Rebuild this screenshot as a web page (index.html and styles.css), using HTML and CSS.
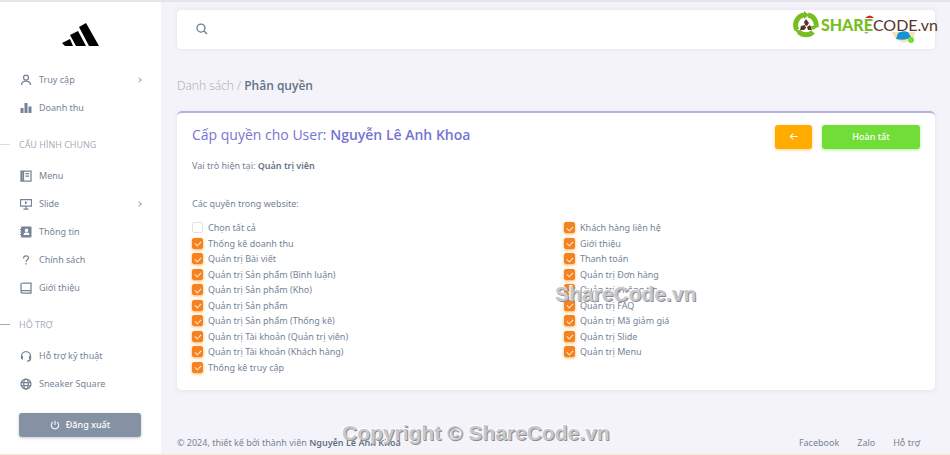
FILE: index.html
```html
<!DOCTYPE html>
<html lang="vi">
<head>
<meta charset="UTF-8">
<meta name="viewport" content="width=device-width, initial-scale=1.0">
<title>Phân quyền</title>
<link rel="stylesheet" href="styles.css">
</head>
<body>

<div class="layout">
    <aside class="sidebar">
        <a class="brand" href="#" aria-label="Trang chủ">
            <svg width="38" height="24" viewBox="0 0 38 24"><path d="M0 20l8-4 3 7H3zM8 12l8-4 8 15H14zM17 4l7-4 13 23H27z"/></svg>
        </a>
        <nav>
            <a class="item" href="#"><svg class="ico" viewBox="0 0 24 24"><circle cx="12" cy="7" r="5"/><path d="M3 22c0-5 3-8 9-8s9 3 9 8"/></svg>Truy cập<span class="arrow"></span></a>
            <a class="item" href="#"><svg class="ico solid" viewBox="0 0 24 24"><path d="M1 12h6v10H1zM9 2h6v20H9zM17 9h6v13h-6z"/></svg>Doanh thu</a>
            <h6>CẤU HÌNH CHUNG</h6>
            <a class="item" href="#"><svg class="ico" viewBox="0 0 24 24"><path d="M2 2h20v20H2zM7 2v20M11 7h7M11 12h7M4 2v20"/></svg>Menu</a>
            <a class="item" href="#"><svg class="ico" viewBox="0 0 24 24"><path d="M1 3h22v13H1zM12 16v6M7 22h10"/><path class="fill" d="M10 6l5 3.500-5 3.500z"/></svg>Slide<span class="arrow"></span></a>
            <a class="item" href="#"><svg class="ico solid" viewBox="0 0 24 24"><path fill-rule="evenodd" d="M4 1h17q2 0 2 2v18q0 2-2 2H4q-2 0-2-2v-3H0v-2h2v-3H0v-2h2V8H0V6h2V3q0-2 2-2zM13 5a3.500 3.500 0 1 0 .1 0zM7 18h12c0-4-3-5-6-5s-6 1-6 5z"/></svg>Thông tin</a>
            <a class="item" href="#"><svg class="ico" viewBox="0 0 24 24"><path d="M7 9c0-7 10-7 10-1 0 4-5 3-5 8M12 18v3"/></svg>Chính sách</a>
            <a class="item" href="#"><svg class="ico" viewBox="0 0 24 24"><path d="M5 2h17v20H5c-4 0-4-5 0-5h17M2 19V4l2-2"/></svg>Giới thiệu</a>
            <h6 class="dark">HỖ TRỢ</h6>
            <a class="item" href="#"><svg class="ico" viewBox="0 0 24 24"><path d="M3 15v-3a9 9 0 0 1 18 0v6q0 4-7 4"/><path class="fill" d="M2 12h4v7H4l-2-2zM18 12h4v5l-2 2h-2z"/></svg>Hỗ trợ kỹ thuật</a>
            <a class="item" href="#"><svg class="ico" viewBox="0 0 24 24"><circle cx="12" cy="12" r="10"/><ellipse cx="12" cy="12" rx="4.500" ry="10"/><path d="M2 9h20M2 15h20"/></svg>Sneaker Square</a>
        </nav>
        <button class="btn logout" type="button"><svg class="ico" viewBox="0 0 24 24"><path d="M12 2v10M7 5a9 9 0 1 0 10 0"/></svg>Đăng xuất</button>
    </aside>

    <main>
        <header class="topbar">
            <button class="search" type="button" aria-label="Tìm kiếm"><svg class="ico" viewBox="0 0 24 24"><circle cx="10" cy="10" r="8"/><path d="M16 16l6 6"/></svg></button>
            <!-- avatar, nằm dưới logo ShareCode -->
            <svg class="avatar" width="24" height="16" viewBox="0 0 24 16"><path fill="#f5e3b5" d="M0 4h23q0 8-11 11Q2 12 0 4z"/><path fill="#1593d2" d="M4 11l2-6q5-3 10-1l3 5q-5 4-15 2z"/><circle cx="19" cy="12" r="3" fill="#71dd37"/></svg>
            <svg class="bell" width="10" height="20" viewBox="0 0 10 20"><path fill="#e0242b" d="M1 3q5-5 9 0z"/><path fill="#a1acb8" d="M0 17h5l-3 2z"/></svg>
            <a class="sharecode" href="#">
                <svg width="26" height="28" viewBox="0 0 26 28">
                    <g fill="none" stroke="#78be20" stroke-width="5"><path d="M4 19A10 10 0 0 1 12 4"/><path d="M15 4a10 10 0 0 1 8 12"/><path d="M20 21A10 10 0 0 1 6 21"/></g>
                    <path fill="#78be20" d="M11 0l5 4-5 4zM26 15l-6 4-3-4zM2 19l6 0-2 5z"/>
                    <path fill="#5b3427" d="M13 8l3 4-2 3-2-1-1-3zM7 19l1-4 4-1 1 3-2 2zM19 19h-4l-1-3 3-2z"/>
                </svg>
                <span class="sc-name"><b>SHARE</b>CODE.vn</span>
            </a>
        </header>

        <h4 class="crumb"><span>Danh sách /</span> Phân quyền</h4>

        <form class="card">
            <div class="card-head">
                <h5>Cấp quyền cho User: <b>Nguyễn Lê Anh Khoa</b></h5>
                <div class="actions">
                    <button class="btn back" type="button" aria-label="Quay lại"><svg class="ico" viewBox="0 0 24 24"><path d="M21 11H4M10 4l-7 7 7 7"/></svg></button>
                    <button class="btn done" type="submit">Hoàn tất</button>
                </div>
            </div>
            <p class="role">Vai trò hiện tại: <b>Quản trị viên</b></p>
            <p class="note">Các quyền trong website:</p>
            <div class="perms">
                <label><input type="checkbox">Chọn tất cả</label>
                <label><input type="checkbox" checked>Thống kê doanh thu</label>
                <label><input type="checkbox" checked>Quản trị Bài viết</label>
                <label><input type="checkbox" checked>Quản trị Sản phẩm (Bình luận)</label>
                <label><input type="checkbox" checked>Quản trị Sản phẩm (Kho)</label>
                <label><input type="checkbox" checked>Quản trị Sản phẩm</label>
                <label><input type="checkbox" checked>Quản trị Sản phẩm (Thống kê)</label>
                <label><input type="checkbox" checked>Quản trị Tài khoản (Quản trị viên)</label>
                <label><input type="checkbox" checked>Quản trị Tài khoản (Khách hàng)</label>
                <label><input type="checkbox" checked>Thống kê truy cập</label>
                <label><input type="checkbox" checked>Khách hàng liên hệ</label>
                <label><input type="checkbox" checked>Giới thiệu</label>
                <label><input type="checkbox" checked>Thanh toán</label>
                <label><input type="checkbox" checked>Quản trị Đơn hàng</label>
                <label><input type="checkbox" checked>Quản trị Thông tin</label>
                <label><input type="checkbox" checked>Quản trị FAQ</label>
                <label><input type="checkbox" checked>Quản trị Mã giảm giá</label>
                <label><input type="checkbox" checked>Quản trị Slide</label>
                <label><input type="checkbox" checked>Quản trị Menu</label>
            </div>
        </form>

        <footer>
            <div>© 2024, thiết kế bởi thành viên <b>Nguyễn Lê Anh Khoa</b></div>
            <div class="links"><a href="#">Facebook</a><a href="#">Zalo</a><a href="#">Hỗ trợ</a></div>
        </footer>
    </main>
</div>

<div class="mark mark-center">ShareCode.vn</div>
<div class="mark mark-bottom">Copyright © ShareCode.vn</div>

</body>
</html>
```
FILE: styles.css
```css
* {
    box-sizing: border-box;
}
body {
    margin: 0;
    font-family: "Noto Sans", "Open Sans", sans-serif;
    font-size: 9px;
    line-height: 16px;
    color: #748496;
    background: #f4f3f9;
    border-top: 2px solid #e4e4ea;
    position: relative;
}
a {
    color: inherit;
    text-decoration: none;
}
b {
    font-weight: 600;
    color: #627386;
}
p, h4, h5, h6 {
    margin: 0;
}
h4, h5, h6 {
    font-family: "Open Sans", sans-serif;
}
.layout {
    display: flex;
    min-height: calc(100vh - 2px);
    border-bottom: 1px solid #f2e9dc;
}
.ico {
    width: 12px;
    height: 12px;
    fill: none;
    stroke: currentColor;
    stroke-width: 2.5;
    flex: none;
}
.ico.solid, .ico .fill {
    fill: currentColor;
    stroke: none;
}

/* thanh bên */
.sidebar {
    width: 161px;
    flex: none;
    background: #fff;
}
.brand {
    display: block;
    height: 64px;
    padding: 21px 0 0 62px;
}
.brand svg {
    display: block;
}
.item {
    display: flex;
    align-items: center;
    height: 28px;
    padding: 0 19px 0 20px;
    gap: 7px;
}
.arrow {
    width: 4px;
    height: 4px;
    margin-left: auto;
    margin-right: 1px;
    border: solid #a0aab5;
    border-width: 1px 1px 0 0;
    transform: rotate(45deg);
}
.sidebar h6 {
    display: flex;
    align-items: center;
    gap: 9px;
    height: 40px;
    padding-top: 5px;
    font-size: 9px;
    font-weight: 400;
    color: #a1acb8;
}
.sidebar h6::before {
    content: "";
    width: 10px;
    height: 1px;
    background: #d9dee3;
}
.sidebar h6.dark::before {
    background: #a1acb8;
}
.btn {
    display: flex;
    align-items: center;
    justify-content: center;
    height: 24px;
    border: 0;
    border-radius: 3px;
    padding: 0;
    font: 500 9px/16px "Noto Sans", "Open Sans", sans-serif;
    color: #fff;
}
.btn .ico {
    width: 10px;
    height: 10px;
}
.logout {
    gap: 6px;
    width: 122px;
    margin: 15px 0 0 19px;
    background: #8592a3;
    box-shadow: 0 1px 3px rgba(133, 146, 163, .5);
}

/* nội dung */
main {
    flex: 1;
    min-width: 0;
    display: flex;
    flex-direction: column;
    padding: 8px 15px 3px 16px;
}
.topbar {
    position: relative;
    display: flex;
    align-items: center;
    height: 39px;
    padding: 0 19px;
    background: #fff;
    border-radius: 4px;
    box-shadow: 0 0 4px rgba(67, 89, 113, .12);
}
.search {
    display: flex;
    padding: 0 0 2px;
    border: 0;
    background: none;
    color: #697a8d;
}
.sharecode {
    position: absolute;
    right: -3px;
    top: 1px;
    display: flex;
    align-items: center;
    gap: 2px;
}
.sc-name {
    font: 16px/24px "Lato", "Liberation Sans", sans-serif;
    color: #5b3427;
}
.sc-name b {
    font-weight: 900;
    color: #78be20;
}
.avatar {
    position: absolute;
    right: 19px;
    top: 18px;
}
.bell {
    position: absolute;
    right: 61px;
    top: 5px;
}
.crumb {
    margin: 29px 0 17px;
    font-size: 12px;
    line-height: 16px;
    font-weight: 600;
    color: #627386;
}
.crumb span {
    font-weight: 300;
    color: #a1acb8;
}
.card {
    padding: 12px 15px 15px;
    background: #fff;
    border-top: 2px solid #b2b3dc;
    border-radius: 5px;
    box-shadow: 0 1px 4px rgba(67, 89, 113, .1);
}
.card-head {
    display: flex;
    justify-content: space-between;
}
.card h5 {
    font-size: 14px;
    line-height: 20px;
    font-weight: 400;
    color: #7674d4;
}
.card h5 b {
    color: inherit;
}
.actions {
    display: flex;
    gap: 10px;
}
.back {
    width: 37px;
    background: #ffab00;
    box-shadow: 0 1px 3px rgba(255, 171, 0, .5);
}
.done {
    width: 98px;
    background: #71dd37;
    box-shadow: 0 1px 3px rgba(113, 221, 55, .5);
}
.role {
    margin: 9px 0 22px;
}
.note {
    margin-bottom: 8px;
}
.perms {
    display: grid;
    grid-template-rows: repeat(10, 1fr);
    grid-template-columns: 1fr 1fr;
    grid-auto-flow: column;
    column-gap: 16px;
    min-height: 155px;
    line-height: 15px;
}
.perms label {
    display: flex;
    align-items: center;
    gap: 5px;
}
.perms input {
    appearance: none;
    width: 11px;
    height: 11px;
    margin: 0;
    border: 1px solid #e1e4e8;
    border-radius: 2px;
}
.perms input:checked {
    display: grid;
    place-items: center;
    border-color: #f58220;
    background: #f58220;
    box-shadow: 0 1px 3px rgba(255, 140, 0, .7);
}
.perms input:checked::before {
    content: "";
    width: 5px;
    height: 3px;
    border: solid #ffe6cf;
    border-width: 0 0 1px 1px;
    transform: rotate(-45deg);
}
footer {
    display: flex;
    justify-content: space-between;
    margin-top: auto;
    padding-right: 15px;
}
.links {
    display: flex;
    gap: 18px;
}

/* chữ chìm */
.mark {
    position: absolute;
    font: bold 21px/24px "Liberation Sans", sans-serif;
    color: #c8c8ca;
    text-shadow: 1px 1px 0 #8e8e92, -1px -1px 0 #fff;
    pointer-events: none;
    white-space: nowrap;
}
.mark-center {
    left: 555px;
    top: 280px;
}
.mark-bottom {
    left: 342px;
    bottom: 10px;
}
```
